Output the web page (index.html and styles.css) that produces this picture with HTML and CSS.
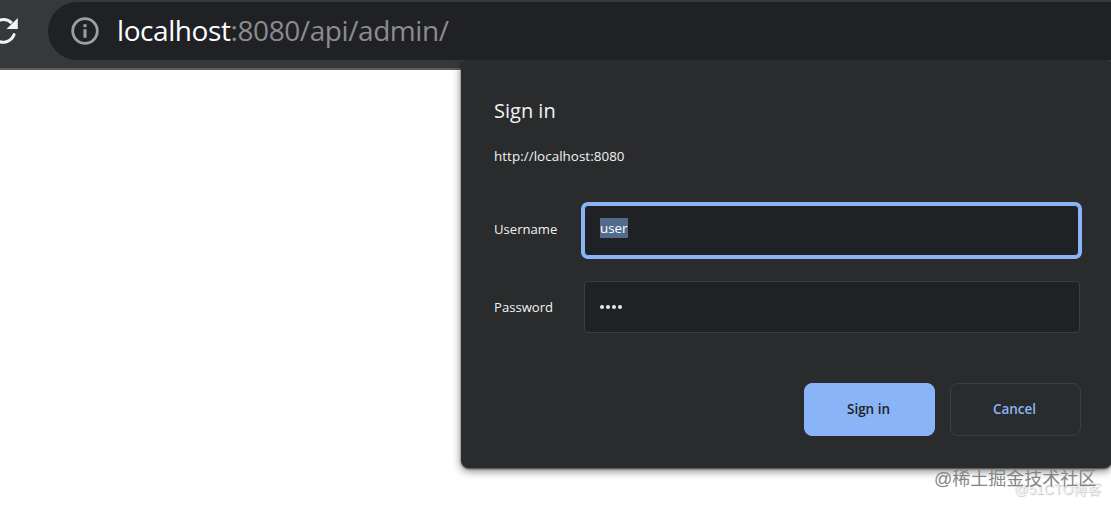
FILE: index.html
```html
<!DOCTYPE html>
<html lang="en">
<head>
    <meta charset="UTF-8">
    <meta name="viewport" content="width=device-width, initial-scale=1.0">
    <title>localhost:8080/api/admin/</title>
    <link rel="stylesheet" href="styles.css">
</head>
<body>
    <header class="toolbar">
        <svg class="reload" width="18" height="28" viewBox="0 0 18 28">
            <path d="M-5 6.3 A11.5 11.5 0 0 1 11.8 6.1" fill="none" stroke="#f1f3f4" stroke-width="3"/>
            <path d="M17.8 1 V12 H6.5 Z" fill="#f1f3f4"/>
            <path d="M14.1 17.6 A11.5 11.5 0 0 1 -5 21.7" fill="none" stroke="#f1f3f4" stroke-width="3" stroke-linecap="round"/>
        </svg>
        <div class="omnibox">
            <svg class="info" width="28" height="28" viewBox="0 0 28 28">
                <circle cx="14" cy="14" r="12.3" fill="none" stroke="#9aa0a6" stroke-width="2.8"/>
                <rect x="12.5" y="7.2" width="3" height="3" fill="#9aa0a6"/>
                <rect x="12.5" y="12.2" width="3" height="8.6" fill="#9aa0a6"/>
            </svg>
            <div class="url"><span class="host">localhost</span><span class="path">:8080/api/admin/</span></div>
        </div>
    </header>

    <form class="dialog">
        <h1>Sign in</h1>
        <p class="origin">http://localhost:8080</p>
        <div class="row">
            <label class="user-label">Username</label>
            <div class="field focused"><span class="selected">user</span></div>
        </div>
        <div class="row">
            <label>Password</label>
            <div class="field dots"><i></i><i></i><i></i><i></i></div>
        </div>
        <div class="buttons">
            <button type="button" class="primary">Sign in</button>
            <button type="button" class="secondary">Cancel</button>
        </div>
    </form>

    <div class="mark mark-blog">@51CTO博客</div>
    <div class="mark mark-site">@稀土掘金技术社区</div>
</body>
</html>
```
FILE: styles.css
```css
* {
    box-sizing: border-box;
}

body {
    margin: 0;
    height: 505px;
    position: relative;
    overflow: hidden;
    background-color: #fff;
    font-family: "Open Sans", "Noto Sans", sans-serif;
}

.toolbar {
    display: flex;
    height: 70px;
    padding-top: 2px;
    background-color: #37383c;
    border-bottom: 2px solid #5b5c5f;
}

.reload {
    margin: 15px 30px 0 0;
    flex: none;
}

.omnibox {
    flex: 1;
    display: flex;
    align-items: center;
    height: 58px;
    padding-left: 23px;
    border-radius: 29px 0 0 29px;
    background-color: #202124;
}

.info {
    margin-right: 18px;
}

.url {
    padding-bottom: 2px;
    font-size: 28px;
    line-height: 40px;
    letter-spacing: -0.42px;
    white-space: nowrap;
}

.host {
    color: #fff;
}

.path {
    color: #8c8c8c;
}

.dialog {
    position: absolute;
    left: 461px;
    top: 60px;
    width: 651px;
    height: 408px;
    padding: 36px 31px 0 33px;
    border-radius: 8px;
    background-color: #292b2c;
    box-shadow: 0 3px 8px rgba(0, 0, 0, 0.5), 0 1px 2px rgba(0, 0, 0, 0.6);
    /* nothing of the shadow falls on the address bar */
    clip-path: inset(0 -20px -20px -20px);
    color: #f1f3f4;
    font-size: 13.4px;
}

.dialog h1 {
    margin: 0;
    font-size: 20px;
    font-weight: 400;
    line-height: 30px;
}

.origin {
    margin: 20px 0 39px;
    line-height: 20px;
    letter-spacing: 0.05px;
}

.row {
    display: flex;
    align-items: center;
    height: 51px;
    margin-bottom: 25px;
}

.row label {
    width: 90px;
    font-size: 13.1px;
}

.row .user-label {
    padding-bottom: 4px;
}

.field {
    display: flex;
    align-items: center;
    width: 496px;
    height: 52px;
    padding-left: 15px;
    border: 1px solid #3c3d40;
    border-radius: 4px;
    background-color: #202124;
}

.focused {
    width: 495px;
    height: 51px;
    border-color: #8ab4f8;
    box-shadow: 0 0 0 3px #8ab4f8;
}

.selected {
    height: 20px;
    line-height: 21px;
    margin-bottom: 5px;
    background-color: #526a8e;
    color: #fff;
}

.dots {
    gap: 2px;
}

.dots i {
    width: 4px;
    height: 4px;
    border-radius: 50%;
    background-color: #e8eaed;
}

.buttons {
    display: flex;
    justify-content: flex-end;
    gap: 15px;
    margin-top: 51px;
}

button {
    width: 131px;
    height: 53px;
    padding: 0 2px 1px 0;
    border: 1px solid #3c4043;
    border-radius: 8px;
    font-family: inherit;
    font-size: 13.5px;
    font-weight: 600;
}

.primary {
    border-color: #8ab4f8;
    background-color: #8ab4f8;
    color: #202124;
}

.secondary {
    background-color: transparent;
    color: #8ab4f8;
}

/* watermarks over the page corner */
.mark {
    position: absolute;
    white-space: nowrap;
    font-family: "Liberation Sans", "Noto Sans CJK SC", sans-serif;
}

.mark-site {
    left: 934px;
    top: 466px;
    font-size: 18px;
    line-height: 26px;
    color: #858585;
}

.mark-blog {
    left: 1014px;
    top: 479px;
    font-size: 14px;
    line-height: 20px;
    color: #f0f0f0;
    text-shadow: 1px 1px 1px #c4c4c4;
}
```
